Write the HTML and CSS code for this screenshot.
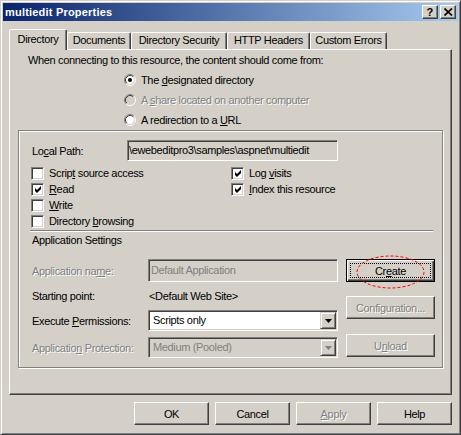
FILE: index.html
```html
<!DOCTYPE html>
<html>
<head>
<meta charset="utf-8">
<link rel="stylesheet" href="styles.css">
</head>
<body>
<div class="window">
  <div class="titlebar">
    <span class="title">multiedit Properties</span>
    <div class="tbtns">
      <span class="tbtn q">?</span>
      <span class="tbtn"><svg width="9" height="8" viewBox="0 0 9 8"><path d="M0.5 0.5 L8 7.5 M8 0.5 L0.5 7.5" stroke="#000" stroke-width="1.7" fill="none"/></svg></span>
    </div>
  </div>
  <div class="content">
    <div class="tabs">
      <div class="tab sel w1">Directory</div>
      <div class="tab w2">Documents</div>
      <div class="tab w3">Directory Security</div>
      <div class="tab w4">HTTP Headers</div>
      <div class="tab w5">Custom Errors</div>
    </div>
    <div class="panel">
      <div class="intro">When connecting to this resource, the content should come from:</div>
      <div class="radios">
        <div class="radio">
          <svg class="rb" width="12" height="12" viewBox="0 0 12 12"><circle cx="6" cy="6" r="4.5" fill="#fff"/><path d="M2.11 9.89 A5.5 5.5 0 0 1 9.89 2.11" stroke="#808080" fill="none"/><path d="M9.89 2.11 A5.5 5.5 0 0 1 2.11 9.89" stroke="#fff" fill="none"/><path d="M2.82 9.18 A4.5 4.5 0 0 1 9.18 2.82" stroke="#404040" fill="none"/><path d="M9.18 2.82 A4.5 4.5 0 0 1 2.82 9.18" stroke="#D4D0C8" fill="none"/><circle cx="6" cy="6" r="2" fill="#000"/></svg>
          <span>The <u>d</u>esignated directory</span>
        </div>
        <div class="radio dis">
          <svg class="rb" width="12" height="12" viewBox="0 0 12 12"><circle cx="6" cy="6" r="4.5" fill="#D4D0C8"/><path d="M2.11 9.89 A5.5 5.5 0 0 1 9.89 2.11" stroke="#808080" fill="none"/><path d="M9.89 2.11 A5.5 5.5 0 0 1 2.11 9.89" stroke="#fff" fill="none"/><path d="M2.82 9.18 A4.5 4.5 0 0 1 9.18 2.82" stroke="#404040" fill="none"/><path d="M9.18 2.82 A4.5 4.5 0 0 1 2.82 9.18" stroke="#D4D0C8" fill="none"/></svg>
          <span>A <u>s</u>hare located on another computer</span>
        </div>
        <div class="radio">
          <svg class="rb" width="12" height="12" viewBox="0 0 12 12"><circle cx="6" cy="6" r="4.5" fill="#fff"/><path d="M2.11 9.89 A5.5 5.5 0 0 1 9.89 2.11" stroke="#808080" fill="none"/><path d="M9.89 2.11 A5.5 5.5 0 0 1 2.11 9.89" stroke="#fff" fill="none"/><path d="M2.82 9.18 A4.5 4.5 0 0 1 9.18 2.82" stroke="#404040" fill="none"/><path d="M9.18 2.82 A4.5 4.5 0 0 1 2.82 9.18" stroke="#D4D0C8" fill="none"/></svg>
          <span>A redirection to a <u>U</u>RL</span>
        </div>
      </div>
      <div class="group">
        <div class="pathrow">
          <span class="lbl pl">Lo<u>c</u>al Path:</span>
          <div class="field path">\ewebeditpro3\samples\aspnet\multiedit</div>
        </div>
        <div class="checks">
          <div class="check"><span class="cb"></span><span>Scrip<u>t</u> source access</span></div>
          <div class="check"><span class="cb"><svg width="9" height="9" viewBox="0 0 9 9"><path d="M1 3 L3 5 L7 1 L7 4 L3 8 L1 6 Z" fill="#000"/></svg></span><span>Log <u>v</u>isits</span></div>
          <div class="check"><span class="cb"><svg width="9" height="9" viewBox="0 0 9 9"><path d="M1 3 L3 5 L7 1 L7 4 L3 8 L1 6 Z" fill="#000"/></svg></span><span><u>R</u>ead</span></div>
          <div class="check"><span class="cb"><svg width="9" height="9" viewBox="0 0 9 9"><path d="M1 3 L3 5 L7 1 L7 4 L3 8 L1 6 Z" fill="#000"/></svg></span><span><u>I</u>ndex this resource</span></div>
          <div class="check"><span class="cb"></span><span><u>W</u>rite</span></div>
          <div></div>
          <div class="check"><span class="cb"></span><span>Directory <u>b</u>rowsing</span></div>
          <div></div>
        </div>
        <div class="sep"></div>
        <div class="appset">Application Settings</div>
        <div class="app">
          <div class="appleft">
            <div class="arow r1">
              <span class="lbl al dtext">Application na<u>m</u>e:</span>
              <div class="field afield dfield">Default Application</div>
            </div>
            <div class="arow r2">
              <span class="lbl al">Starting point:</span>
              <span class="sp">&lt;Default Web Site&gt;</span>
            </div>
            <div class="arow r3">
              <span class="lbl al">Execute <u>P</u>ermissions:</span>
              <div class="select">
                <span class="val">Scripts only</span>
                <span class="dd"><svg width="7" height="4" viewBox="0 0 7 4"><path d="M0 0 H7 L3.5 4 Z" fill="#000"/></svg></span>
              </div>
            </div>
            <div class="arow r4">
              <span class="lbl al dtext">Applicatio<u>n</u> Protection:</span>
              <div class="select dsel">
                <span class="val">Medium (Pooled)</span>
                <span class="dd"><svg width="7" height="4" viewBox="0 0 7 4"><path d="M0 0 H7 L3.5 4 Z" fill="#808080"/></svg></span>
              </div>
            </div>
          </div>
          <div class="appright">
            <div class="btn def">
              <span class="focus">Cr<u>e</u>ate</span>
              <svg class="ring" width="69" height="34" viewBox="0 0 69 34"><ellipse cx="34.5" cy="17" rx="33.5" ry="16" fill="none" stroke="#FF0000" stroke-width="1" stroke-dasharray="3 2"/></svg>
            </div>
            <div class="btn dbtn cfg">Configuration...</div>
            <div class="btn dbtn unl">U<u>n</u>load</div>
          </div>
        </div>
      </div>
    </div>
    <div class="footer">
      <div class="btn fb">OK</div>
      <div class="btn fb">Cancel</div>
      <div class="btn fb dbtn"><u>A</u>pply</div>
      <div class="btn fb">Help</div>
    </div>
  </div>
</div>
</body>
</html>
```
FILE: styles.css
```css
* { box-sizing: border-box; }
body {
  margin: 0;
  font-family: "Liberation Sans", Arial, sans-serif;
  font-size: 11px;
  letter-spacing: -0.35px;
  color: #000;
  background: #D4D0C8;
}
u { text-decoration: underline; text-underline-offset: 1px; }
.window {
  width: 461px;
  height: 435px;
  background: #D4D0C8;
  border: 1px solid;
  border-color: #D4D0C8 #404040 #404040 #D4D0C8;
  box-shadow: inset 1px 1px #fff, inset -1px -1px #808080;
  padding: 2px;
  display: flex;
  flex-direction: column;
}
.titlebar {
  height: 18px;
  flex: none;
  display: flex;
  align-items: center;
  justify-content: space-between;
  background: linear-gradient(to right, #0A246A, #A6CAF0);
  padding: 0 2px;
  color: #fff;
  font-weight: bold;
  letter-spacing: 0.2px;
}
.title { line-height: 13px; }
.tbtns { display: flex; gap: 2px; }
.tbtn {
  width: 16px;
  height: 14px;
  background: #D4D0C8;
  border: 1px solid;
  border-color: #fff #404040 #404040 #fff;
  box-shadow: inset -1px -1px #808080;
  display: flex;
  align-items: center;
  justify-content: center;
  color: #000;
}
.tbtn.q { font-size: 11px; font-weight: bold; line-height: 12px; }
.content { padding: 8px 6px 0 6px; }
.tabs { display: flex; align-items: flex-end; height: 20px; }
.tab {
  height: 17px;
  border: 1px solid;
  border-bottom: none;
  border-color: #fff #404040 transparent #fff;
  box-shadow: inset -1px 0 #808080;
  border-radius: 2px 2px 0 0;
  text-align: center;
  line-height: 15px;
  white-space: nowrap;
}
.tab.sel {
  height: 21px;
  margin-bottom: -1px;
  position: relative;
  z-index: 1;
  background: #D4D0C8;
  line-height: 18px;
}
.w1 { width: 58px; }
.w2 { width: 64px; }
.w3 { width: 96px; }
.w4 { width: 83px; }
.w5 { width: 77px; }
.panel {
  width: 443px;
  height: 346px;
  border: 1px solid;
  border-color: #fff #404040 #404040 #fff;
  box-shadow: inset -1px -1px #808080;
}
.intro { padding: 4px 0 0 18px; line-height: 13px; }
.radios { margin: 3px 0 0 114px; }
.radio { display: flex; align-items: center; height: 20px; gap: 5px; }
.rb { flex: none; }
.dis span { color: #808080; text-shadow: 1px 1px 0 #fff; }
.group {
  margin-left: 8px;
  width: 425px;
  height: 238px;
  border: 1px solid #808080;
  box-shadow: inset 1px 1px #fff, 1px 1px #fff;
  padding: 9px 0 0 12px;
}
.pathrow { display: flex; align-items: center; height: 21px; }
.lbl { padding-left: 1px; white-space: nowrap; }
.pl { width: 96px; }
.field {
  height: 21px;
  border: 1px solid;
  border-color: #808080 #fff #fff #808080;
  box-shadow: inset 1px 1px #404040, inset -1px -1px #D4D0C8;
  padding: 0 2px;
  line-height: 19px;
  white-space: nowrap;
  overflow: hidden;
}
.path { width: 211px; padding-left: 1px; }
.checks {
  display: grid;
  grid-template-columns: 200px 1fr;
  grid-auto-rows: 16px;
  margin-top: 4px;
}
.check { display: flex; align-items: center; gap: 5px; white-space: nowrap; }
.cb {
  flex: none;
  width: 13px;
  height: 13px;
  border: 1px solid;
  border-color: #808080 #fff #fff #808080;
  box-shadow: inset 1px 1px #404040, inset -1px -1px #D4D0C8;
  background: #fff;
  display: flex;
  align-items: center;
  justify-content: center;
}
.cb svg { display: block; margin: 1px 0 0 1px; }
.sep {
  width: 403px;
  height: 2px;
  border-top: 1px solid #808080;
  border-bottom: 1px solid #fff;
  margin: 1px 0 0 -1px;
}
.appset { margin-top: 2px; line-height: 13px; padding-left: 1px; }
.app { display: flex; gap: 8px; margin-top: 12px; }
.appleft { width: 307px; }
.arow { display: flex; align-items: center; }
.al { width: 117px; }
.r1 { height: 23px; }
.r2 { height: 27px; }
.r3 { height: 21px; margin-top: 1px; }
.r4 { height: 21px; margin-top: 6px; }
.afield { width: 190px; height: 23px; line-height: 21px; }
.dfield { color: #808080; background: #D4D0C8; }
.dtext { color: #808080; text-shadow: 1px 1px 0 #fff; }
.sp { padding-left: 1px; }
.select {
  width: 190px;
  height: 21px;
  display: flex;
  align-items: center;
  border: 1px solid;
  border-color: #808080 #fff #fff #808080;
  box-shadow: inset 1px 1px #404040, inset -1px -1px #D4D0C8;
  background: #fff;
  padding: 1px 1px 1px 1px;
}
.select .val { flex: 1; padding-left: 3px; line-height: 17px; white-space: nowrap; }
.select.dsel { background: #D4D0C8; }
.select.dsel .val { color: #808080; }
.dd {
  width: 16px;
  height: 17px;
  flex: none;
  background: #D4D0C8;
  border: 1px solid;
  border-color: #D4D0C8 #404040 #404040 #D4D0C8;
  box-shadow: inset 1px 1px #fff, inset -1px -1px #808080;
  display: flex;
  align-items: center;
  justify-content: center;
}
.dd svg { display: block; margin-left: 1px; }
.appright { width: 89px; display: flex; flex-direction: column; }
.btn {
  height: 23px;
  border: 1px solid;
  border-color: #fff #404040 #404040 #fff;
  box-shadow: inset -1px -1px #808080;
  background: #D4D0C8;
  display: flex;
  align-items: center;
  justify-content: center;
  white-space: nowrap;
}
.btn.def {
  position: relative;
  border-color: #000;
  box-shadow: inset 1px 1px #fff, inset -1px -1px #404040, inset -2px -2px #808080;
  padding: 3px;
}
.focus {
  flex: 1;
  align-self: stretch;
  border: 1px dotted #000;
  display: flex;
  align-items: center;
  justify-content: center;
}
.ring { position: absolute; left: 9px; top: -5px; }
.dbtn { color: #808080; text-shadow: 1px 1px 0 #fff; }
.cfg { margin-top: 14px; }
.unl { margin-top: 15px; }
.footer { display: flex; justify-content: flex-end; gap: 6px; margin-top: 7px; }
.fb { width: 75px; }
```
